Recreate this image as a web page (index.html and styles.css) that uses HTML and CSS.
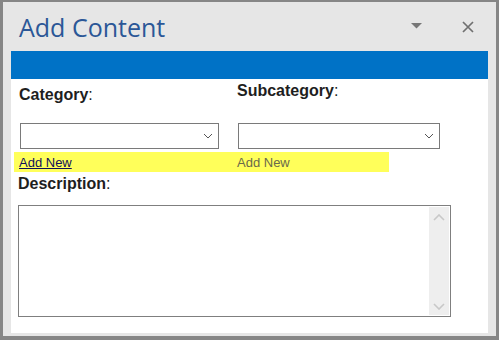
FILE: index.html
```html
<!DOCTYPE html>
<html lang="en">
<head>
    <meta charset="UTF-8">
    <title>Add Content</title>
    <link rel="stylesheet" href="styles.css">
</head>
<body>
    <div class="pane">
        <div class="pane-header">
            <h1 class="pane-title">Add Content</h1>
            <div class="pane-buttons">
                <svg class="menu-btn" width="11" height="6" viewBox="0 0 11 6">
                    <polygon points="0,0 11,0 5.5,5.5" fill="#777"/>
                </svg>
                <svg class="close-btn" width="12" height="12" viewBox="0 0 12 12">
                    <path d="M1 1 L11 11 M11 1 L1 11" stroke="#707070" stroke-width="1.7"/>
                </svg>
            </div>
        </div>

        <div class="pane-band"></div>

        <div class="pane-body">
            <div class="fields">
                <label class="field-label cat-label"><b>Category</b>:</label>
                <label class="field-label sub-label"><b>Subcategory</b>:</label>

                <div class="dropdown">
                    <svg width="10" height="6" viewBox="0 0 10 6">
                        <path d="M1 1 L5 5 L9 1" fill="none" stroke="#555" stroke-width="1"/>
                    </svg>
                </div>
                <div class="dropdown">
                    <svg width="10" height="6" viewBox="0 0 10 6">
                        <path d="M1 1 L5 5 L9 1" fill="none" stroke="#555" stroke-width="1"/>
                    </svg>
                </div>
            </div>

            <div class="add-row">
                <a href="#" class="add-link">Add New</a>
                <span class="add-text">Add New</span>
            </div>

            <label class="field-label desc-label"><b>Description</b>:</label>

            <div class="textbox">
                <textarea class="textbox-input"></textarea>
                <div class="scroll">
                    <svg width="12" height="7" viewBox="0 0 12 7">
                        <path d="M1 6 L6 1 L11 6" fill="none" stroke="#c8c8c8" stroke-width="1.6"/>
                    </svg>
                    <svg width="12" height="7" viewBox="0 0 12 7">
                        <path d="M1 1 L6 6 L11 1" fill="none" stroke="#c8c8c8" stroke-width="1.6"/>
                    </svg>
                </div>
            </div>
        </div>
    </div>
</body>
</html>
```

FILE: styles.css
```css
body {
    margin: 0;
    background: #868686;
}

.pane {
    width: 499px;
    height: 340px;
    box-sizing: border-box;
    border-style: solid;
    border-color: #868686;
    border-width: 2px 3px 4px 3px;
    background: #e6e6e6;
    display: flex;
    flex-direction: column;
}

.pane-header {
    height: 49px;
    display: flex;
    align-items: center;
    justify-content: space-between;
    padding: 0 22px 0 16px;
}

.pane-title {
    margin: 0;
    font-family: "Open Sans", sans-serif;
    font-weight: 400;
    font-size: 25px;
    color: #2b5797;
    position: relative;
    top: 0;
}

.pane-buttons {
    display: flex;
    align-items: center;
    gap: 40px;
}

.menu-btn {
    margin-top: -2px;
}

.pane-band {
    height: 28px;
    margin: 0 8px;
    background: #0072c6;
}

.pane-body {
    flex: 1;
    margin: 0 8px 3px;
    background: #fff;
    font-family: "Liberation Sans", Arial, sans-serif;
    display: flex;
    flex-direction: column;
}

.fields {
    display: grid;
    grid-template-columns: 199px 202px;
    column-gap: 19px;
    margin-left: 9px;
    align-items: start;
}

.field-label {
    font-size: 16px;
    line-height: 18px;
    color: #1e1e1e;
}

.field-label b {
    font-weight: 700;
}

.cat-label {
    margin: 7px 0 0 -1px;
}

.sub-label {
    margin: 3px 0 0 -1px;
}

.dropdown {
    grid-row: 2;
    margin-top: 19px;
    height: 26px;
    box-sizing: border-box;
    border: 1px solid #7a7a7a;
    display: flex;
    align-items: center;
    justify-content: flex-end;
    padding-right: 5px;
}

.add-row {
    margin: 3px 0 0 3px;
    width: 375px;
    height: 20px;
    background: #ffff5a;
    display: grid;
    grid-template-columns: 223px 1fr;
    align-items: center;
    font-size: 13px;
}

.add-link {
    padding-left: 5px;
    color: #10105a;
    justify-self: start;
}

.add-text {
    color: #6a6a4a;
}

.desc-label {
    margin: 3px 0 0 7px;
}

.textbox {
    margin: 12px 0 0 7px;
    width: 433px;
    height: 112px;
    box-sizing: border-box;
    border: 1px solid #7f7f7f;
    display: flex;
}

.textbox-input {
    flex: 1;
    border: none;
    outline: none;
    resize: none;
    margin: 0;
    padding: 2px;
}

.scroll {
    width: 20px;
    margin: 1px 1px 1px 0;
    background: #eeeeee;
    display: flex;
    flex-direction: column;
    justify-content: space-between;
    align-items: center;
    padding: 7px 0 5px;
}
```
